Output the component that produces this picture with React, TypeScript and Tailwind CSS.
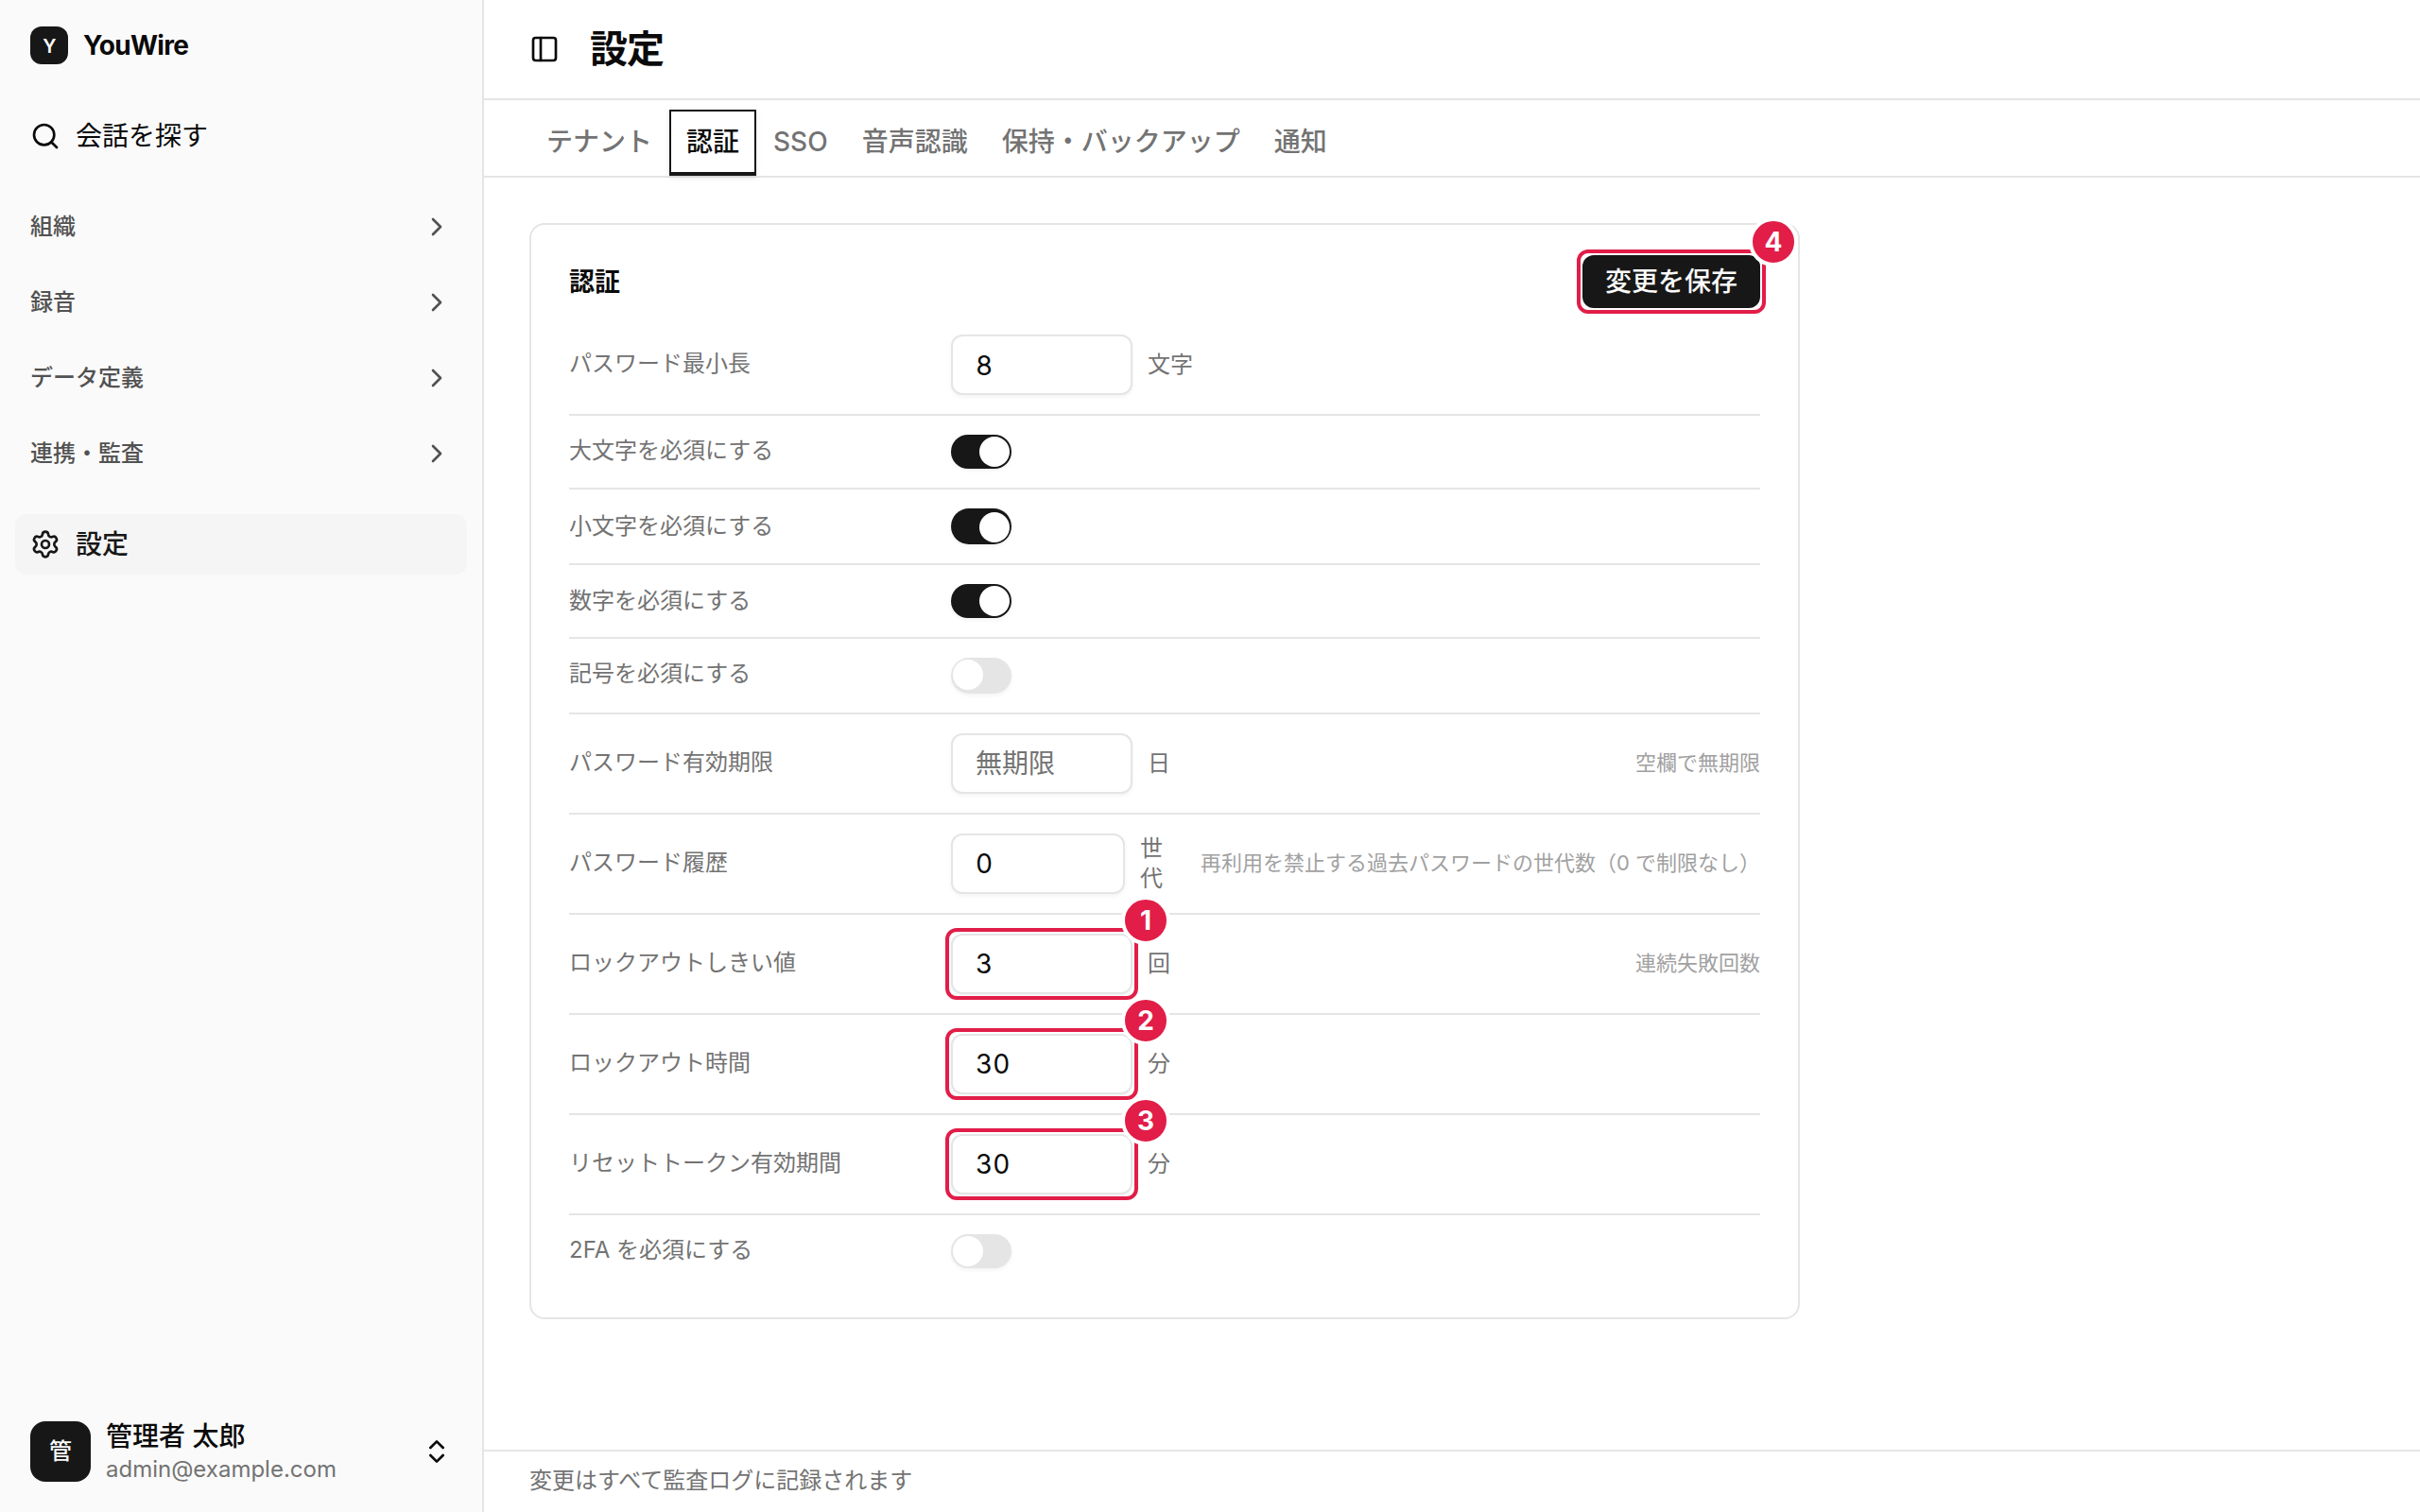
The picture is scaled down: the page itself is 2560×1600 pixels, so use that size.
import { useState } from 'react';
import { ChevronRight, ChevronsUpDown, PanelLeft, Search, Settings } from 'lucide-react';

const navGroups = ['組織', '録音', 'データ定義', '連携・監査'];

const tabs = ['テナント', '認証', 'SSO', '音声認識', '保持・バックアップ', '通知'];

type Row = {
  label: string;
  type: 'number' | 'switch';
  value?: string;
  placeholder?: string;
  unit?: string;
  hint?: string;
  on?: boolean;
  step?: number;
  rowClass?: string;
  labelClass?: string;
  trackClass?: string;
  inputClass?: string;
};

const rows: Row[] = [
  { label: 'パスワード最小長', type: 'number', value: '8', unit: '文字', inputClass: 'pt-0.5' },
  { label: '大文字を必須にする', type: 'switch', on: true },
  {
    label: '小文字を必須にする',
    type: 'switch',
    on: true,
    rowClass: 'h-20',
    labelClass: 'pt-[3px]',
    trackClass: 'h-[38px] pt-1',
  },
  { label: '数字を必須にする', type: 'switch', on: true, labelClass: 'pt-0.5' },
  { label: '記号を必須にする', type: 'switch', on: false, rowClass: 'h-20', trackClass: 'h-[38px] pt-0.5' },
  { label: 'パスワード有効期限', type: 'number', placeholder: '無期限', unit: '日', hint: '空欄で無期限' },
  {
    label: 'パスワード履歴',
    type: 'number',
    value: '0',
    unit: '世代',
    hint: '再利用を禁止する過去パスワードの世代数（0 で制限なし）',
  },
  { label: 'ロックアウトしきい値', type: 'number', value: '3', unit: '回', hint: '連続失敗回数', step: 1 },
  { label: 'ロックアウト時間', type: 'number', value: '30', unit: '分', step: 2 },
  { label: 'リセットトークン有効期間', type: 'number', value: '30', unit: '分', step: 3 },
  { label: '2FA を必須にする', type: 'switch', on: false, rowClass: 'h-[76px]' },
];

// Red frame with a numbered badge around a control
function Callout({ step }: { step: number }) {
  return (
    <div className="pointer-events-none absolute -inset-1.5 rounded-xl border-4 border-[#e11d48]">
      <span className="absolute -top-[38px] -right-[38px] flex size-[52px] items-center justify-center rounded-full border-4 border-white bg-[#e11d48] text-[28px] leading-none font-bold text-white">
        {step}
      </span>
    </div>
  );
}

function Toggle({ on, trackClass, onClick }: { on: boolean; trackClass?: string; onClick: () => void }) {
  return (
    <button
      type="button"
      role="switch"
      aria-checked={on}
      onClick={onClick}
      className={`flex w-16 items-start rounded-full px-0.5 shadow-[0_2px_4px_rgba(0,0,0,0.05)] ${
        on ? 'bg-[#171717]' : 'bg-[#e5e5e5]'
      } ${trackClass || 'h-9 pt-0.5'}`}
    >
      <span className={`size-8 rounded-full bg-white ${on ? 'translate-x-7' : ''}`} />
    </button>
  );
}

function SettingRow({ row }: { row: Row }) {
  const [value, setValue] = useState(row.value || '');
  const [on, setOn] = useState(!!row.on);
  const narrow = row.unit === '世代';

  if (row.type === 'switch') {
    return (
      <div className={`flex items-start border-b-2 border-[#e5e5e5] pt-5 last:border-b-0 ${row.rowClass || 'h-[78px]'}`}>
        <span className={`w-[404px] text-2xl leading-8 text-[#737373] ${row.labelClass || 'pt-px'}`}>{row.label}</span>
        <Toggle on={on} trackClass={row.trackClass} onClick={() => setOn(!on)} />
      </div>
    );
  }

  return (
    <div className="flex h-[106px] items-center border-b-2 border-[#e5e5e5]">
      <span className="w-[404px] pb-0.5 text-2xl leading-8 text-[#737373]">{row.label}</span>
      <div className="flex flex-1 items-center gap-4">
        <div className={`relative h-16 ${narrow ? 'w-[184px]' : 'w-48'}`}>
          <input
            type="text"
            value={value}
            placeholder={row.placeholder}
            onChange={(e) => setValue(e.target.value)}
            className={`h-16 w-full rounded-xl border-2 border-[#e5e5e5] bg-white px-6 text-[28px] text-[#0a0a0a] tabular-nums shadow-[0_2px_4px_rgba(0,0,0,0.05)] outline-none placeholder:text-[#737373] ${
              row.inputClass || ''
            }`}
          />
          {row.step && <Callout step={row.step} />}
        </div>
        <span className={`text-2xl leading-8 text-[#737373] ${narrow ? 'w-6' : 'pb-px'}`}>{row.unit}</span>
      </div>
      {row.hint && <span className="pb-[3px] text-[22px] leading-8 whitespace-nowrap text-[#a1a1a1]">{row.hint}</span>}
    </div>
  );
}

export default function App() {
  const [activeTab, setActiveTab] = useState('認証');

  return (
    <div
      lang="ja"
      className="flex h-[1600px] w-[2560px] overflow-hidden bg-white font-['Inter','Noto_Sans_CJK_JP',sans-serif] text-[#0a0a0a]"
    >
      <aside className="flex w-[512px] shrink-0 flex-col border-r-2 border-[#e5e5e5] bg-[#fafafa] px-4 py-4">
        <div className="flex h-16 items-center gap-4 px-4">
          <div className="flex size-10 items-center justify-center rounded-xl bg-[#171717] pt-px pl-px text-xl font-semibold text-[#fafafa]">
            Y
          </div>
          <span className="text-[28px] font-bold tracking-tight">YouWire</span>
        </div>

        <a href="#" className="mt-8 flex h-16 items-center gap-4 px-4 text-[28px]">
          <Search className="size-8" />
          <span>会話を探す</span>
        </a>

        <nav className="mt-8 flex flex-col gap-4">
          {navGroups.map((group) => (
            <button key={group} className="flex h-16 items-center justify-between px-4 text-2xl font-medium text-[#525252]">
              <span className="pb-px">{group}</span>
              <ChevronRight className="size-8" />
            </button>
          ))}
        </nav>

        <a href="#" className="mt-8 flex h-16 items-center gap-4 rounded-xl bg-[#f5f5f5] px-4 text-[28px] font-medium text-[#171717]">
          <Settings className="size-8" />
          <span>設定</span>
        </a>

        <div className="mt-auto flex h-24 items-center gap-4 px-4">
          <div className="flex size-16 items-center justify-center rounded-2xl bg-[#171717] text-2xl font-medium text-[#fafafa]">
            管
          </div>
          <div className="flex flex-1 flex-col pt-0.5">
            <span className="text-[28px] leading-[35px] font-medium">管理者 太郎</span>
            <span className="pt-px text-2xl leading-8 text-[#737373]">admin@example.com</span>
          </div>
          <ChevronsUpDown className="size-8" />
        </div>
      </aside>

      <main className="flex flex-1 flex-col">
        <header className="flex h-[106px] shrink-0 items-center gap-8 border-b-2 border-[#e5e5e5] px-12">
          <PanelLeft className="size-8" />
          <h1 className="text-[40px] leading-none font-semibold tracking-tight">設定</h1>
        </header>

        <div className="flex h-[82px] shrink-0 items-end border-b-2 border-[#e5e5e5] px-12">
          {tabs.map((tab) => (
            <button
              key={tab}
              onClick={() => setActiveTab(tab)}
              className={`h-[70px] border-2 border-b-4 px-4 text-[28px] font-medium ${
                tab === activeTab
                  ? 'border-[#171717] text-[#0a0a0a] shadow-[0_2px_6px_rgba(0,0,0,0.1)]'
                  : 'border-transparent text-[#737373]'
              }`}
            >
              {tab}
            </button>
          ))}
        </div>

        <div className="flex-1 px-12 py-12">
          <section className="w-[1344px] rounded-2xl border-2 border-[#e5e5e5] px-10 py-8">
            <div className="mb-2 flex h-14 items-center justify-between">
              <h2 className="pt-0.5 text-[27px] font-semibold">認証</h2>
              <div className="relative">
                <button className="h-14 w-[188px] rounded-xl bg-[#171717] text-[28px] font-medium text-[#fafafa]">
                  変更を保存
                </button>
                <Callout step={4} />
              </div>
            </div>
            {rows.map((row) => (
              <SettingRow key={row.label} row={row} />
            ))}
          </section>
        </div>

        <footer className="flex h-[66px] shrink-0 items-center border-t-2 border-[#e5e5e5] px-12 pb-0.5 text-2xl text-[#737373]">
          変更はすべて監査ログに記録されます
        </footer>
      </main>
    </div>
  );
}
